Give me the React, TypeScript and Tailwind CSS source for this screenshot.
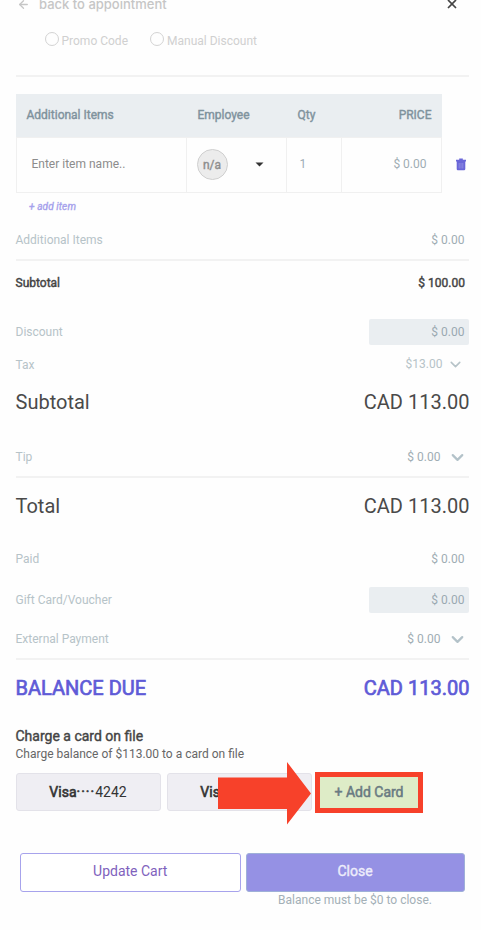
import { ArrowLeft, ChevronDown, X } from "lucide-react";

interface AmountRowProps {
  label: string;
  amount: string;
  className: string;
  boxed?: boolean;
  expandable?: boolean;
}

function AmountRow({ label, amount, className, boxed, expandable }: AmountRowProps) {
  return (
    <div className={`flex items-center justify-between text-[#b6c3c8] ${className}`}>
      <span>{label}</span>
      {boxed ? (
        <span className="flex h-[26px] w-[100px] items-center justify-end rounded-[2px] bg-[#eaeef1] pr-[5px] text-[#9aa9b1]">
          {amount}
        </span>
      ) : expandable ? (
        <span className="flex items-center gap-[7.5px] pr-[2.5px] text-[#9fadb4]">
          {amount}
          <ChevronDown className="-mb-px h-[19px] w-[19px] text-[#b3c2c9]" strokeWidth={2.8} />
        </span>
      ) : (
        <span className="pr-[5px] text-[#9fadb4]">{amount}</span>
      )}
    </div>
  );
}

function TotalRow({ label, amount, className }: { label: string; amount: string; className: string }) {
  return (
    <div className={`flex items-center justify-between text-[20px] ${className}`}>
      <span>{label}</span>
      <span>{amount}</span>
    </div>
  );
}

const discountTypes = ["Promo Code", "Manual Discount"];

export default function App() {
  return (
    <div className="h-[930px] w-[481px] overflow-hidden bg-[#fefefe] pl-[15.5px] pr-[11.6px] font-['Roboto',sans-serif] text-[12px] leading-[16px]">
      {/* Top bar */}
      <div className="flex h-[20px] items-start justify-between pr-[10px]">
        <div className="-mt-[4px] flex items-center gap-[9.5px] font-['Inter',sans-serif] text-[13px] font-medium text-[#c6c6c6]">
          <ArrowLeft className="ml-px h-[13px] w-[13px]" strokeWidth={2.4} />
          <span>back to appointment</span>
        </div>
        <X className="-mt-[3px] h-[14px] w-[14px] text-[#444]" strokeWidth={3} />
      </div>

      {/* Discount type */}
      <div className="flex h-[42px] items-center gap-[22px] pl-[29px] text-[#d0d0d0]">
        {discountTypes.map((type) => (
          <label key={type} className="flex items-center gap-[3px]">
            <span className="-mt-[4px] h-[14px] w-[14px] rounded-full border border-[#d3d3d3]" />
            {type}
          </label>
        ))}
      </div>

      <div className="mt-[13px] h-[2px] bg-[#f2f2f2]" />

      {/* Items table */}
      <div className="mt-[17px] flex">
        <div className="w-[426.5px]">
          <div className="flex h-[43px] items-center bg-[#eaeef1] pb-[2px] pr-[10.5px] text-[#7f929d] [-webkit-text-stroke:0.4px]">
            <span className="w-[182px] pl-[11px]">Additional Items</span>
            <span className="w-[100px]">Employee</span>
            <span>Qty</span>
            <span className="ml-auto">PRICE</span>
          </div>
          <div className="flex h-[56px] border border-[#f0f0f0]">
            <div className="flex w-[170.5px] items-center border-r border-[#f0f0f0] pb-[2px] pl-[15px] text-[#8c8c8c]">
              Enter item name..
            </div>
            <div className="flex w-[100px] items-center justify-between border-r border-[#f0f0f0] pb-px pl-[9.5px] pr-[22.5px]">
              <span className="flex h-[31px] w-[31px] items-center justify-center rounded-full border-[1.5px] border-[#cfcfcf] bg-[#ececec] text-[#8e8e8e] [-webkit-text-stroke:0.4px]">
                n/a
              </span>
              <svg className="h-[5px] w-[9px]" viewBox="0 0 9 5">
                <path d="M0.5 0.5h8L4.5 4.5z" fill="#333" />
              </svg>
            </div>
            <div className="flex w-[55px] items-center border-r border-[#f0f0f0] pb-[2px] pl-[12.5px] text-[#9fadb4]">1</div>
            <div className="flex flex-1 items-center justify-end pb-[2px] pr-[14.5px] text-[#9fadb4]">$ 0.00</div>
          </div>
        </div>
        <svg className="ml-[13.5px] mt-[64px] h-[13px] w-[10px]" viewBox="0 0 10 13">
          <path d="M3.2 0.6h3.6v1.2H10v1.8H0V1.8h3.2zM0.7 3.6h8.6V11a1.2 1.2 0 0 1-1.2 1.2H1.9A1.2 1.2 0 0 1 0.7 11z" fill="#6a66d8" />
          <path d="M3.2 5v5.5M5 5v5.5M6.8 5v5.5" stroke="#a5a2ea" strokeWidth="0.6" />
        </svg>
      </div>
      <div className="flex h-[27px] items-center pl-[13.5px] text-[10px] italic tracking-[0.12px] text-[#a6a2ec] [-webkit-text-stroke:0.35px]">
        + add item
      </div>

      <AmountRow label="Additional Items" amount="$ 0.00" className="h-[39px]" />
      <div className="h-[2px] bg-[#f2f2f2]" />
      <div className="flex h-[43px] items-center justify-between pr-[4.5px] text-[#444] [-webkit-text-stroke:0.45px]">
        <span>Subtotal</span>
        <span>$ 100.00</span>
      </div>

      <AmountRow label="Discount" amount="$ 0.00" className="mt-[9px] h-[38px]" boxed />
      <div className="flex h-[28px] items-center justify-between text-[#b6c3c8]">
        <span>Tax</span>
        <span className="-mt-[3px] flex items-center gap-[5px] pr-[5px]">
          $13.00
          <ChevronDown className="-mb-px h-[17px] w-[17px]" strokeWidth={2.2} />
        </span>
      </div>
      <TotalRow label="Subtotal" amount="CAD 113.00" className="h-[46px] text-[#4a4a4a]" />

      <AmountRow label="Tip" amount="$ 0.00" className="mt-[12px] h-[39px]" expandable />
      <div className="h-[2px] bg-[#f2f2f2]" />
      <TotalRow label="Total" amount="CAD 113.00" className="h-[55px] text-[#4a4a4a]" />

      <AmountRow label="Paid" amount="$ 0.00" className="mt-[6px] h-[40px]" />
      <AmountRow label="Gift Card/Voucher" amount="$ 0.00" className="h-[41px]" boxed />
      <AmountRow label="External Payment" amount="$ 0.00" className="h-[38px]" expandable />
      <div className="h-[2px] bg-[#f2f2f2]" />
      <TotalRow
        label="BALANCE DUE"
        amount="CAD 113.00"
        className="h-[55px] text-[#5f5bd7] [-webkit-text-stroke:0.7px]"
      />

      {/* Cards on file */}
      <div className="mt-[11px] text-[14px] leading-[20px] text-[#444] [-webkit-text-stroke:0.4px]">Charge a card on file</div>
      <div className="text-[#666]">Charge balance of $113.00 to a card on file</div>
      <div className="relative mt-[11px] flex h-[38px] gap-[6px]">
        <button className="w-[145px] rounded-[3px] border border-[#e3e2e9] bg-[#efeef3] pb-px text-[14px] text-[#333]">
          <span className="[-webkit-text-stroke:0.6px]">
            Visa<span className="tracking-[1px]">····</span>
          </span>
          4242
        </button>
        <button className="w-[145px] rounded-[3px] border border-[#e3e2e9] bg-[#efeef3] pb-px text-[14px] text-[#333]">
          <span className="[-webkit-text-stroke:0.6px]">
            Visa<span className="tracking-[1px]">····</span>
          </span>
          4242
        </button>
        <button className="-ml-[2.5px] -mt-px h-[41px] w-[108px] border-[5px] border-[#f7412a] bg-[#deecc7] pb-[2px] text-[14px] text-[#6a7b82] [-webkit-text-stroke:0.5px]">
          + Add Card
        </button>
        {/* Pointer to the add button */}
        <svg className="absolute left-[202.5px] top-[-12px] h-[64px] w-[94px]" viewBox="0 0 94 64">
          <path d="M0 16.5h69V1l24 31.5L69 63.5V48H0z" fill="#f7412a" />
        </svg>
      </div>

      {/* Actions */}
      <div className="mt-[42px] flex gap-[5px] pl-[4.5px]">
        <button className="h-[38.5px] w-[220.5px] rounded-[3px] border-[1.5px] border-[#a7a3ec] bg-white pb-[2px] text-[14px] text-[#7f62bd]">
          Update Cart
        </button>
        <div className="w-[219px] text-center text-[#a3b0b7]">
          <button className="h-[38.5px] w-full rounded-[3px] border border-[#9fb0d8] bg-[#9591e4] pb-[2px] text-[14px] text-[#eeedfb] [-webkit-text-stroke:0.4px]">
            Close
          </button>
          <div className="leading-[16px]">Balance must be $0 to close.</div>
        </div>
      </div>
    </div>
  );
}
